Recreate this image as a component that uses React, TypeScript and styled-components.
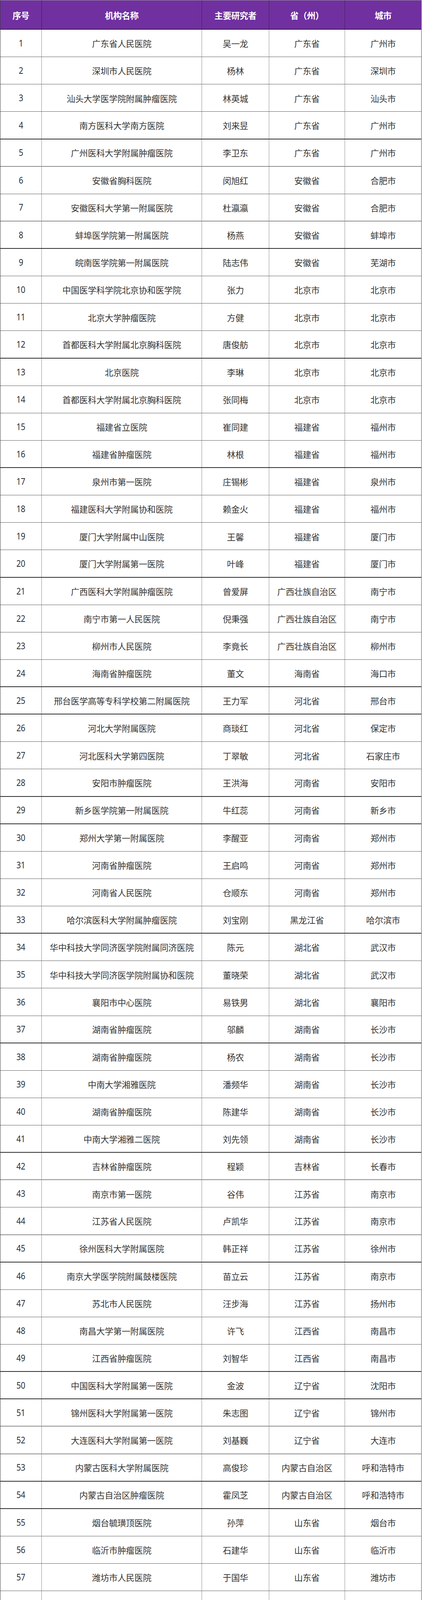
import React from "react";
import styled, { createGlobalStyle } from "styled-components";

const GlobalStyle = createGlobalStyle`
  html, body { margin: 0; padding: 0; background: #ffffff; }
  body { font-family: "Noto Sans CJK SC", "Noto Sans", sans-serif; }
  * { box-sizing: border-box; }
`;

type Rec = [string, string, string, string];

const DATA: Rec[] = [
  ["广东省人民医院", "吴一龙", "广东省", "广州市"],
  ["深圳市人民医院", "杨林", "广东省", "深圳市"],
  ["汕头大学医学院附属肿瘤医院", "林英城", "广东省", "汕头市"],
  ["南方医科大学南方医院", "刘来昱", "广东省", "广州市"],
  ["广州医科大学附属肿瘤医院", "李卫东", "广东省", "广州市"],
  ["安徽省胸科医院", "闵旭红", "安徽省", "合肥市"],
  ["安徽医科大学第一附属医院", "杜瀛瀛", "安徽省", "合肥市"],
  ["蚌埠医学院第一附属医院", "杨燕", "安徽省", "蚌埠市"],
  ["皖南医学院第一附属医院", "陆志伟", "安徽省", "芜湖市"],
  ["中国医学科学院北京协和医学院", "张力", "北京市", "北京市"],
  ["北京大学肿瘤医院", "方健", "北京市", "北京市"],
  ["首都医科大学附属北京胸科医院", "唐俊舫", "北京市", "北京市"],
  ["北京医院", "李琳", "北京市", "北京市"],
  ["首都医科大学附属北京胸科医院", "张同梅", "北京市", "北京市"],
  ["福建省立医院", "崔同建", "福建省", "福州市"],
  ["福建省肿瘤医院", "林根", "福建省", "福州市"],
  ["泉州市第一医院", "庄锡彬", "福建省", "泉州市"],
  ["福建医科大学附属协和医院", "赖金火", "福建省", "福州市"],
  ["厦门大学附属中山医院", "王馨", "福建省", "厦门市"],
  ["厦门大学附属第一医院", "叶峰", "福建省", "厦门市"],
  ["广西医科大学附属肿瘤医院", "曾爱屏", "广西壮族自治区", "南宁市"],
  ["南宁市第一人民医院", "倪秉强", "广西壮族自治区", "南宁市"],
  ["柳州市人民医院", "李竟长", "广西壮族自治区", "柳州市"],
  ["海南省肿瘤医院", "董文", "海南省", "海口市"],
  ["邢台医学高等专科学校第二附属医院", "王力军", "河北省", "邢台市"],
  ["河北大学附属医院", "商琰红", "河北省", "保定市"],
  ["河北医科大学第四医院", "丁翠敏", "河北省", "石家庄市"],
  ["安阳市肿瘤医院", "王洪海", "河南省", "安阳市"],
  ["新乡医学院第一附属医院", "牛红蕊", "河南省", "新乡市"],
  ["郑州大学第一附属医院", "李醒亚", "河南省", "郑州市"],
  ["河南省肿瘤医院", "王启鸣", "河南省", "郑州市"],
  ["河南省人民医院", "仓顺东", "河南省", "郑州市"],
  ["哈尔滨医科大学附属肿瘤医院", "刘宝刚", "黑龙江省", "哈尔滨市"],
  ["华中科技大学同济医学院附属同济医院", "陈元", "湖北省", "武汉市"],
  ["华中科技大学同济医学院附属协和医院", "董晓荣", "湖北省", "武汉市"],
  ["襄阳市中心医院", "易铁男", "湖北省", "襄阳市"],
  ["湖南省肿瘤医院", "邬麟", "湖南省", "长沙市"],
  ["湖南省肿瘤医院", "杨农", "湖南省", "长沙市"],
  ["中南大学湘雅医院", "潘频华", "湖南省", "长沙市"],
  ["湖南省肿瘤医院", "陈建华", "湖南省", "长沙市"],
  ["中南大学湘雅二医院", "刘先领", "湖南省", "长沙市"],
  ["吉林省肿瘤医院", "程颖", "吉林省", "长春市"],
  ["南京市第一医院", "谷伟", "江苏省", "南京市"],
  ["江苏省人民医院", "卢凯华", "江苏省", "南京市"],
  ["徐州医科大学附属医院", "韩正祥", "江苏省", "徐州市"],
  ["南京大学医学院附属鼓楼医院", "苗立云", "江苏省", "南京市"],
  ["苏北市人民医院", "汪步海", "江苏省", "扬州市"],
  ["南昌大学第一附属医院", "许飞", "江西省", "南昌市"],
  ["江西省肿瘤医院", "刘智华", "江西省", "南昌市"],
  ["中国医科大学附属第一医院", "金波", "辽宁省", "沈阳市"],
  ["锦州医科大学附属第一医院", "朱志图", "辽宁省", "锦州市"],
  ["大连医科大学附属第一医院", "刘基巍", "辽宁省", "大连市"],
  ["内蒙古医科大学附属医院", "高俊珍", "内蒙古自治区", "呼和浩特市"],
  ["内蒙古自治区肿瘤医院", "霍凤芝", "内蒙古自治区", "呼和浩特市"],
  ["烟台毓璜顶医院", "孙萍", "山东省", "烟台市"],
  ["临沂市肿瘤医院", "石建华", "山东省", "临沂市"],
  ["潍坊市人民医院", "于国华", "山东省", "潍坊市"],
  ["山东省肿瘤医院", "郭其森", "山东省", "济南市"],
  ["山西省人民医院", "何梅", "山西省", "太原市"],
  ["山西省肿瘤医院", "杨卫华", "山西省", "太原市"],
  ["陕西省人民医院", "白俊", "陕西省", "西安市"],
  ["西安交通大学附属第一医院", "姚煜", "陕西省", "西安市"],
  ["上海胸科医院", "姜丽岩", "上海市", "上海市"],
  ["上海市第一人民医院", "李琦", "上海市", "上海市"],
  ["四川大学华西医院", "邱志新", "四川省", "成都市"],
  ["天津医科大学总医院", "钟殿胜", "天津市", "天津市"],
  ["新疆医科大学附属肿瘤医院", "韩志刚", "新疆维吾尔自治区", "乌鲁木齐市"],
  ["新疆医科大学附属肿瘤医院", "韩志刚", "新疆维吾尔自治区", "乌鲁木齐市"],
  ["云南省肿瘤医院", "黄云超", "云南省", "昆明市"],
  ["浙江大学医学院附属邵逸夫医院", "潘宏铭", "浙江省", "杭州市"],
  ["浙江大学医学院附属第一医院", "周建英", "浙江省", "杭州市"],
  ["宁波市医疗中心李惠利医院", "吴宏成", "浙江省", "宁波市"],
  ["浙江省肿瘤", "范云", "浙江省", "杭州市"],
  ["浙江省台州医院", "何苏苏", "浙江省", "台州市"],
  ["重庆肿瘤医院", "王江红", "重庆市", "重庆市"],
  ["重庆大学附属三峡医院", "任必勇", "重庆市", "重庆市"],
];

// rows after which the reference shows a heavier (page-stitch) rule
const HEAVY = new Set([4, 8, 12, 16, 20, 24, 25, 28, 29, 33, 37, 41, 45, 49, 50, 53, 54, 58, 62, 66, 70, 74]);
const MEDIUM = new Set([5, 7, 42, 44, 51, 52, 59, 60, 61]);

const COLS = "106px 410px 172px 194px 195px";

const Table = styled.div`
  width: 1079px;
  border-top: 1px solid #9a9a9a;
  border-left: 1px solid #3a3a3a;
  border-right: 1px solid #555555;
`;

const HeaderRow = styled.div`
  display: grid;
  grid-template-columns: ${COLS};
  height: 75px;
  background: #7030a0;
  border-bottom: 2px solid #2a2a2a;
`;

const HeadCell = styled.div`
  display: flex;
  align-items: center;
  justify-content: center;
  color: #ffffff;
  font-size: 22px;
  font-weight: 700;
  letter-spacing: -0.5px;
  border-right: 1px solid #3a2450;
  &:last-child { border-right: none; }
`;

const Row = styled.div<{ $rule: "heavy" | "medium" | "thin" }>`
  display: grid;
  grid-template-columns: ${COLS};
  height: 70.13px;
  overflow: hidden;
  background: #ffffff;
  border-bottom: ${(p) =>
    p.$rule === "heavy"
      ? "2px solid #2b2b2b"
      : p.$rule === "medium"
      ? "2px solid #8c8c8c"
      : "1px solid #5e5e5e"};
`;

const Cell = styled.div`
  display: flex;
  align-items: center;
  justify-content: center;
  white-space: nowrap;
  line-height: 1.2;
  color: #353535;
  font-size: 22px;
  font-weight: 400;
  letter-spacing: -0.3px;
  border-right: 1px solid #8e8e8e;
  &:last-child { border-right: none; }
`;

const Num = styled.span`
  display: inline-block;
  font-family: "Noto Sans", "Liberation Sans", sans-serif;
  font-size: 24px;
  letter-spacing: -0.5px;
  transform: scaleX(0.84);
  color: #303030;
`;

const HEADERS = ["序号", "机构名称", "主要研究者", "省（州）", "城市"];

export default function App() {
  return (
    <>
      <GlobalStyle />
      <Table>
        <HeaderRow>
          {HEADERS.map((h) => (
            <HeadCell key={h}>{h}</HeadCell>
          ))}
        </HeaderRow>
        {DATA.map((r, i) => {
          const n = i + 1;
          const rule = HEAVY.has(n) ? "heavy" : MEDIUM.has(n) ? "medium" : "thin";
          return (
            <Row key={n} $rule={rule}>
              <Cell>
                <Num>{n}</Num>
              </Cell>
              <Cell>{r[0]}</Cell>
              <Cell>{r[1]}</Cell>
              <Cell>{r[2]}</Cell>
              <Cell>{r[3]}</Cell>
            </Row>
          );
        })}
      </Table>
    </>
  );
}
